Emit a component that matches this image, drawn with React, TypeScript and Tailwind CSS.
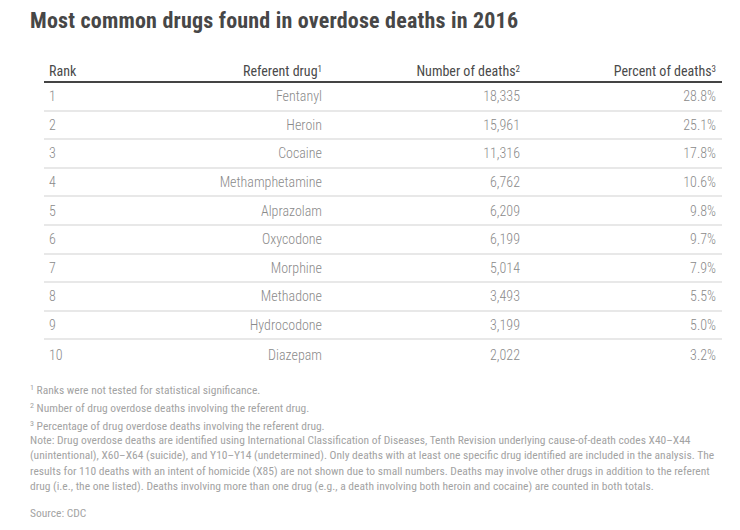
import React from "react";

const rows: [string, string, string, string][] = [
  ["1", "Fentanyl", "18,335", "28.8%"],
  ["2", "Heroin", "15,961", "25.1%"],
  ["3", "Cocaine", "11,316", "17.8%"],
  ["4", "Methamphetamine", "6,762", "10.6%"],
  ["5", "Alprazolam", "6,209", "9.8%"],
  ["6", "Oxycodone", "6,199", "9.7%"],
  ["7", "Morphine", "5,014", "7.9%"],
  ["8", "Methadone", "3,493", "5.5%"],
  ["9", "Hydrocodone", "3,199", "5.0%"],
  ["10", "Diazepam", "2,022", "3.2%"],
];

const font = {
  fontFamily: '"Roboto Condensed", "Liberation Sans Narrow", Roboto, sans-serif',
};

function Sup({ n, size = "text-[9px]" }: { n: string; size?: string }) {
  return <sup className={size}>{n}</sup>;
}

export default function App() {
  return (
    <div
      className="w-[740px] h-[530px] bg-white overflow-hidden px-[30px] font-['Roboto_Condensed','Liberation_Sans_Narrow',Roboto,sans-serif]"
      style={font}
    >
      <h1 className="pt-[9px] text-[22px] leading-[24px] font-bold tracking-[0.2px] text-[#474747] whitespace-nowrap">
        Most common drugs found in overdose deaths in 2016
      </h1>
      <div className="ml-[14px] w-[678px]">
        <div className="h-[50px] flex items-end pb-[2px] border-b-2 border-[#444] text-[14px] leading-[16px] text-[#4a4a4a]">
          <div className="w-[120px] pl-[5px]">Rank</div>
          <div className="w-[158px] text-right">
            Referent drug<Sup n="1" />
          </div>
          <div className="w-[198px] text-right">
            Number of deaths<Sup n="2" />
          </div>
          <div className="w-[196px] text-right">
            Percent of deaths<Sup n="3" />
          </div>
        </div>
        {rows.map((r, i) => (
          <div
            key={r[0]}
            className={
              i < rows.length - 1
                ? "h-[28.6px] flex items-center border-b-2 border-[#e8e8e8] text-[14px] leading-[16px] font-light text-[#8a8a8a]"
                : "h-[28.6px] flex items-center text-[14px] leading-[16px] font-light text-[#8a8a8a]"
            }
          >
            <div className="w-[120px] pl-[5px]">{r[0]}</div>
            <div className="w-[158px] text-right">{r[1]}</div>
            <div className="w-[198px] text-right">{r[2]}</div>
            <div className="w-[196px] text-right">{r[3]}</div>
          </div>
        ))}
      </div>
      <div className="mt-[12px] text-[11.5px] text-[#a3a3a3] whitespace-nowrap">
        <div className="leading-[18px]">
          <Sup n="1" size="text-[8px]" /> Ranks were not tested for statistical significance.
        </div>
        <div className="leading-[18px]">
          <Sup n="2" size="text-[8px]" /> Number of drug overdose deaths involving the referent drug.
        </div>
        <div className="leading-[18px]">
          <Sup n="3" size="text-[8px]" /> Percentage of drug overdose deaths involving the referent drug.
        </div>
        <div className="-mt-[2px] leading-[15.5px]">
          <div>
            Note: Drug overdose deaths are identified using International Classification of Diseases, Tenth Revision underlying cause-of-death codes X40–X44
          </div>
          <div>
            (unintentional), X60–X64 (suicide), and Y10–Y14 (undetermined). Only deaths with at least one specific drug identified are included in the analysis. The
          </div>
          <div>
            results for 110 deaths with an intent of homicide (X85) are not shown due to small numbers. Deaths may involve other drugs in addition to the referent
          </div>
          <div>
            drug (i.e., the one listed). Deaths involving more than one drug (e.g., a death involving both heroin and cocaine) are counted in both totals.
          </div>
        </div>
        <div className="mt-[11px] leading-[15.5px]">Source: CDC</div>
      </div>
    </div>
  );
}
